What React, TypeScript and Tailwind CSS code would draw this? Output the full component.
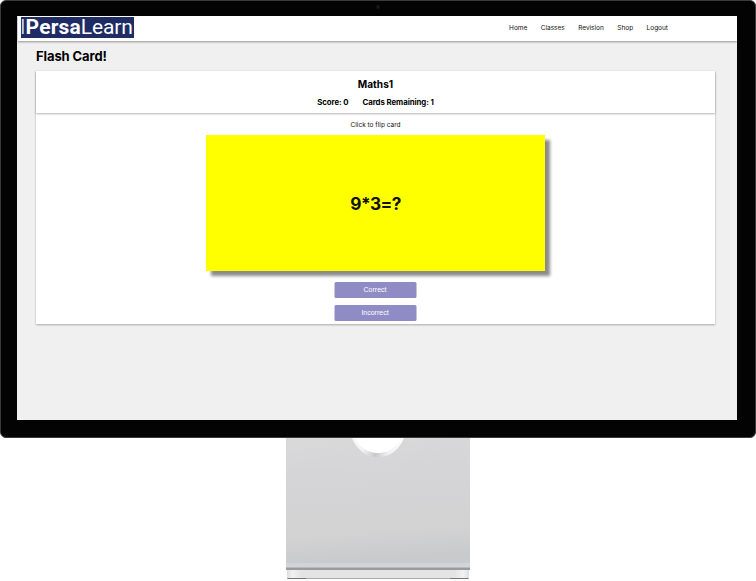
const links = ["Home", "Classes", "Revision", "Shop", "Logout"];

function Navbar() {
  return (
    <nav className="relative flex h-[25px] shrink-0 items-start bg-white shadow-[0_1px_2px_rgba(0,0,0,0.4)]">
      <div className="ml-[3px] mt-px flex h-[20.5px] w-[112.5px] items-center whitespace-nowrap bg-[#1e2b65] font-['Roboto',sans-serif] text-[21px] leading-[20px] text-white">
        <span className="-ml-px font-light">I</span>
        <span className="font-bold tracking-[0.15px]">Persa</span>
        <span className="font-normal tracking-[-0.15px]">Learn</span>
      </div>
      <ul className="ml-auto mr-[69px] flex h-[25px] items-center gap-[13.4px] text-[6.5px] text-[#111]">
        {links.map((label) => (
          <li key={label}>{label}</li>
        ))}
      </ul>
    </nav>
  );
}

function FlashCard() {
  return (
    <section className="ml-[18px] mr-[22px] flex h-[253px] flex-col items-center bg-white shadow-[0_1px_2px_rgba(0,0,0,0.3)]">
      <header className="flex h-[42px] w-full shrink-0 flex-col items-center shadow-[0_1px_2px_rgba(0,0,0,0.3)]">
        <h2 className="mt-[7px] text-[10.1px] font-bold leading-[13px]">Maths1</h2>
        <div className="mt-[5px] flex gap-[14px] text-[7.8px] font-bold leading-[12px] tracking-[-0.06px]">
          <span>Score: 0</span>
          <span>Cards Remaining: 1</span>
        </div>
      </header>
      <p className="mt-[7px] text-[6.5px] leading-[10px] text-[#111]">Click to flip card</p>
      <div className="mt-[5px] flex h-[136px] w-[339px] shrink-0 items-center justify-center bg-[#ff0] pt-px text-[17.3px] font-bold tracking-[-0.6px] text-[#111100] [font-feature-settings:'calt'_0] shadow-[5px_5px_3px_#8b8b8b]">
        9*3=?
      </div>
      <button className="mt-[11px] h-4 w-[82px] shrink-0 -translate-x-[0.5px] rounded-[1.5px] bg-[#8f8bc5] font-['Liberation_Sans',sans-serif] text-[7px] leading-4 text-white">Correct</button>
      <button className="mt-[7px] h-4 w-[82px] shrink-0 -translate-x-[0.5px] rounded-[1.5px] bg-[#8f8bc5] font-['Liberation_Sans',sans-serif] text-[7px] leading-4 text-white">Incorrect</button>
    </section>
  );
}

function Stand() {
  return (
    <svg className="mx-auto block h-[143px] w-[184px]" viewBox="286 438 184 143">
      <defs>
        <linearGradient id="metal" x1="0" y1="0" x2="0.1" y2="1">
          <stop offset="0" stopColor="#d9d9da" />
          <stop offset="0.3" stopColor="#d5d5d7" />
          <stop offset="0.8" stopColor="#d2d2d3" />
          <stop offset="1" stopColor="#c9cacc" />
        </linearGradient>
        <linearGradient id="rim" x1="0" y1="0" x2="1" y2="0">
          <stop offset="0" stopColor="#fafafa" />
          <stop offset="0.2" stopColor="#f3f3f3" />
          <stop offset="0.45" stopColor="#c9c9c9" />
          <stop offset="0.7" stopColor="#f1f1f1" />
          <stop offset="1" stopColor="#fff" />
        </linearGradient>
        <linearGradient id="foot" x1="0" y1="0" x2="1" y2="0">
          <stop offset="0" stopColor="#dedede" />
          <stop offset="0.03" stopColor="#f2f2f2" />
          <stop offset="0.08" stopColor="#e4e4e4" />
          <stop offset="0.92" stopColor="#e4e4e4" />
          <stop offset="0.97" stopColor="#f2f2f2" />
          <stop offset="1" stopColor="#dedede" />
        </linearGradient>
      </defs>
      <path d="M286 438h184v126H286z" fill="url(#metal)" />
      <path d="M286 563h184v4H286z" fill="#d0d4d6" />
      <path d="M286 567h184v1H286z" fill="#b8babc" />
      <path d="M286 568h184v2H286z" fill="#999b9e" />
      <path d="M287 570h182v9H287z" fill="url(#foot)" />
      <path d="M287 578h182v1H287z" fill="#aaa" />
      <path d="M288 578h18v1H288zM450 578h18v1H450z" fill="#777" />
      <path d="M352 438C357 450 366 457 378 457S399 450 404 438z" fill="url(#rim)" />
      <path d="M355 438C360 448 368 453 378 453S396 448 401 438z" fill="#fff" />
    </svg>
  );
}

export default function App() {
  return (
    <main className="h-[581px] w-[756px] overflow-hidden bg-white font-['Inter',sans-serif] text-black">
      <div className="relative flex h-[438px] w-[756px] flex-col rounded-[6px] border border-[#3b3b3b] bg-[#030303] pl-4 pr-[18px] pt-[15px]">
        <span className="absolute left-[375px] top-[4px] size-[4px] rounded-full bg-[#111824]" />
        <div className="flex h-[404px] w-[720px] flex-col overflow-hidden bg-[#f0f0f0] pl-px">
          <Navbar />
          <h1 className="ml-[18px] mt-[7px] h-[23px] text-[13px] font-bold leading-[17px] tracking-[-0.1px]">Flash Card!</h1>
          <FlashCard />
        </div>
      </div>
      <Stand />
    </main>
  );
}
